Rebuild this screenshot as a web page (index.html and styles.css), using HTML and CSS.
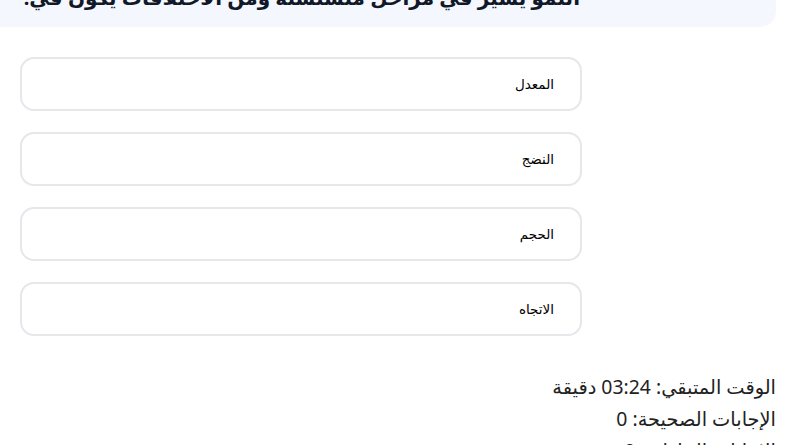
FILE: index.html
```html
<!DOCTYPE html>
<html lang="ar">
<head>
<meta charset="utf-8">
<link rel="stylesheet" href="styles.css">
</head>
<body>
<div class="page">
  <div class="question-box">
    <p class="question-text" dir="rtl">النمو يسير في مراحل متسلسلة ومن الاختلافات يكون في:</p>
  </div>
  <div class="options">
    <button class="option" dir="rtl">المعدل</button>
    <button class="option" dir="rtl">النضج</button>
    <button class="option" dir="rtl">الحجم</button>
    <button class="option" dir="rtl">الاتجاه</button>
  </div>
  <div class="stats" dir="rtl">
    <p class="stat">الوقت المتبقي: 03:24 دقيقة</p>
    <p class="stat">الإجابات الصحيحة: 0</p>
    <p class="stat">الإجابات الخاطئة: 0</p>
  </div>
</div>
</body>
</html>
```
FILE: styles.css
```css
html, body {
  margin: 0;
  padding: 0;
  background: #ffffff;
  overflow: hidden;
}
.page {
  width: 792px;
  height: 445px;
  overflow: hidden;
  font-family: "Noto Sans", "DejaVu Sans", sans-serif;
  color: #1f2937;
}
.question-box {
  margin: -35px 16px 0 0;
  padding: 19px 0 15px;
  background: #f4f7fe;
  border-radius: 0 0 16px 0;
}
.question-text {
  margin: 0 0 0 30px;
  width: 550px;
  font-size: 20px;
  line-height: 28px;
  font-weight: 700;
  color: #111827;
  text-align: right;
  white-space: nowrap;
}
.options {
  display: flex;
  flex-direction: column;
  align-items: flex-start;
  gap: 21px;
  padding: 30px 0 0 20px;
}
.option {
  width: 562px;
  height: 54px;
  box-sizing: border-box;
  border: 2px solid #e5e7eb;
  border-radius: 14px;
  background: #ffffff;
  padding: 0 26px;
  text-align: right;
  font-family: "DejaVu Sans", sans-serif;
  font-size: 13.5px;
  font-weight: 400;
  color: #000000;
}
.stats {
  padding: 35px 16px 0 0;
}
.stat {
  margin: 0;
  font-size: 19.4px;
  line-height: 32px;
  color: #222222;
  text-align: right;
}
```
